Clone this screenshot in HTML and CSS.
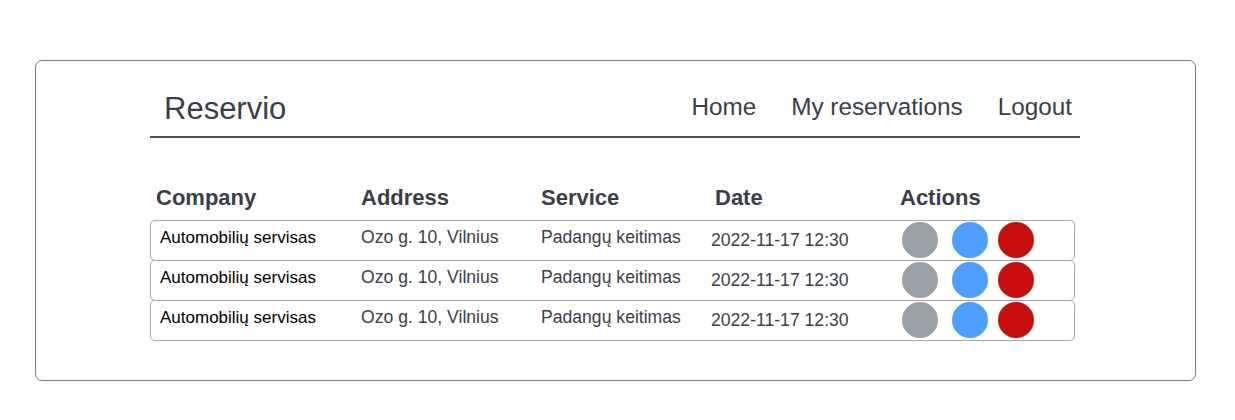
FILE: index.html
```html
<!DOCTYPE html>
<html>
<head>
<meta charset="utf-8">
<link rel="stylesheet" href="styles.css">
</head>
<body>
<div class="frame">
  <div class="content">
    <header class="header">
      <div class="brand">Reservio</div>
      <nav class="nav">
        <a class="nav-link">Home</a>
        <a class="nav-link">My reservations</a>
        <a class="nav-link">Logout</a>
      </nav>
    </header>
    <div class="table">
      <div class="thead">
        <div>Company</div>
        <div>Address</div>
        <div>Service</div>
        <div>Date</div>
        <div>Actions</div>
      </div>
      <div class="row">
        <div class="c-company">Automobilių servisas</div>
        <div class="c-address">Ozo g. 10, Vilnius</div>
        <div class="c-service">Padangų keitimas</div>
        <div class="c-date">2022-11-17 12:30</div>
        <div class="actions"><span class="dot gray"></span><span class="dot blue"></span><span class="dot red"></span></div>
      </div>
      <div class="row">
        <div class="c-company">Automobilių servisas</div>
        <div class="c-address">Ozo g. 10, Vilnius</div>
        <div class="c-service">Padangų keitimas</div>
        <div class="c-date">2022-11-17 12:30</div>
        <div class="actions"><span class="dot gray"></span><span class="dot blue"></span><span class="dot red"></span></div>
      </div>
      <div class="row">
        <div class="c-company">Automobilių servisas</div>
        <div class="c-address">Ozo g. 10, Vilnius</div>
        <div class="c-service">Padangų keitimas</div>
        <div class="c-date">2022-11-17 12:30</div>
        <div class="actions"><span class="dot gray"></span><span class="dot blue"></span><span class="dot red"></span></div>
      </div>
    </div>
  </div>
</div>
</body>
</html>
```
FILE: styles.css
```css
* { box-sizing: border-box; }
html, body { margin: 0; padding: 0; background: #ffffff; }
body {
  font-family: "Liberation Sans", Arial, sans-serif;
  color: #3a3e48;
}
.frame {
  margin: 60px 0 0 35px;
  width: 1161px;
  height: 321px;
  border: 1px solid #76797f;
  border-radius: 7px;
  padding-left: 114px;
}
.content { width: 930px; }
.header {
  display: flex;
  justify-content: space-between;
  align-items: flex-start;
  height: 77px;
  border-bottom: 2px solid #4b505a;
  padding: 0 8px 0 14px;
}
.brand {
  font-size: 31px;
  line-height: 36px;
  margin-top: 30px;
  color: #3a3e48;
}
.nav {
  display: flex;
  gap: 35px;
  margin-top: 32px;
}
.nav-link {
  font-size: 24.3px;
  line-height: 28px;
  color: #3a3e48;
}
.table { margin-top: 47px; }
.thead {
  display: grid;
  grid-template-columns: 205px 180px 174px 185px 1fr;
  padding-left: 6px;
  font-size: 22px;
  line-height: 26px;
  font-weight: bold;
  color: #3a3e48;
  margin-bottom: 9px;
}
.row {
  display: grid;
  grid-template-columns: 201px 180px 170px 191px 1fr;
  align-items: start;
  width: 925px;
  height: 41px;
  border: 1px solid #a3a6ab;
  border-radius: 5px;
  padding-left: 9px;
  font-size: 17.6px;
  line-height: 20px;
  color: #3a3e48;
}
.row + .row { margin-top: -1px; }
.c-company { color: #000; font-size: 17px; padding-top: 7px; }
.c-address { padding-top: 6px; }
.c-service { padding-top: 6px; }
.c-date { padding-top: 9px; }
.actions { display: flex; padding-top: 1px; }
.dot {
  width: 36px;
  height: 36px;
  border-radius: 50%;
  display: block;
}
.dot.gray { background: #98a0a8; }
.dot.blue { background: #4d9efd; margin-left: 14px; }
.dot.red { background: #c80f0f; margin-left: 10px; }
```
